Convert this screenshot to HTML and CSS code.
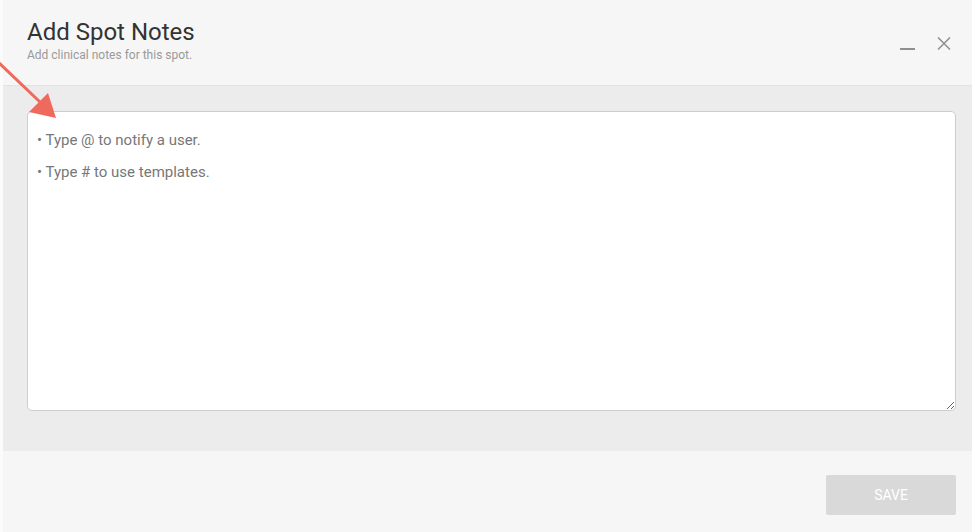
FILE: index.html
```html
<!DOCTYPE html>
<html lang="en">
<head>
    <meta charset="UTF-8">
    <meta name="viewport" content="width=device-width, initial-scale=1.0">
    <title>Add Spot Notes</title>
    <link rel="stylesheet" href="styles.css">
</head>
<body>
    <div class="dialog">
        <div class="dialog-header">
            <div class="heading">
                <h1 class="title">Add Spot Notes</h1>
                <p class="subtitle">Add clinical notes for this spot.</p>
            </div>
            <div class="header-actions">
                <button class="icon-btn minimize" title="Minimize">
                    <svg width="15" height="13" viewBox="0 0 15 13"><line x1="0" y1="12" x2="15" y2="12" stroke="#8f8f8f" stroke-width="2"/></svg>
                </button>
                <button class="icon-btn close" title="Close">
                    <svg width="14" height="13" viewBox="0 0 14 13"><path d="M1 0.5 L13 12.5 M13 0.5 L1 12.5" stroke="#8f8f8f" stroke-width="1.5" fill="none"/></svg>
                </button>
            </div>
        </div>

        <div class="dialog-body">
            <textarea class="notes-field" placeholder="• Type @ to notify a user.&#10;&#10;• Type # to use templates."></textarea>
        </div>

        <div class="dialog-footer">
            <button class="save-btn" disabled>SAVE</button>
        </div>
    </div>

    <svg class="pointer-arrow" width="70" height="130" viewBox="0 0 70 130">
        <line x1="-2" y1="62" x2="40" y2="102" stroke="#ef6a5d" stroke-width="3"/>
        <polygon points="56,118 29,112 48,93" fill="#ef6a5d"/>
    </svg>
</body>
</html>
```

FILE: styles.css
```css
body {
    margin: 0;
    font-family: Roboto, 'Noto Sans', sans-serif;
    background: #fbfbfb;
    height: 532px;
    overflow: hidden;
}

.dialog {
    margin-left: 3px;
    height: 532px;
    display: flex;
    flex-direction: column;
    background: #f6f6f6;
}

.dialog-header {
    height: 86px;
    box-sizing: border-box;
    display: flex;
    justify-content: space-between;
    align-items: flex-start;
    padding: 18px 21px 0 24px;
    border-bottom: 1px solid #e2e2e2;
    background: #f6f6f6;
}

.title {
    margin: 0;
    font-size: 24px;
    font-weight: 400;
    color: #333;
    line-height: 28px;
}

.subtitle {
    margin: 2px 0 0;
    font-size: 12px;
    color: #9a9a9a;
    line-height: 14px;
}

.header-actions {
    display: flex;
    align-items: flex-start;
    gap: 22px;
    margin-top: 19px;
}

.icon-btn {
    background: none;
    border: none;
    padding: 0;
    display: block;
    line-height: 0;
    cursor: pointer;
}

.dialog-body {
    flex: 1;
    background: #ececec;
    padding: 25px 16px 40px 24px;
    display: flex;
}

.notes-field {
    flex: 1;
    box-sizing: border-box;
    border: 1px solid #cdcdcd;
    border-radius: 5px;
    background: #fff;
    padding: 20px 10px 10px 9px;
    font-family: Roboto, 'Noto Sans', sans-serif;
    font-size: 15px;
    line-height: 16px;
    color: #333;
    resize: vertical;
    outline: none;
}

.notes-field::placeholder {
    color: #777;
}

.dialog-footer {
    height: 81px;
    box-sizing: border-box;
    display: flex;
    justify-content: flex-end;
    align-items: flex-start;
    padding: 24px 16px 0 0;
    background: #f6f6f6;
}

.save-btn {
    width: 130px;
    height: 40px;
    border: none;
    border-radius: 2px;
    background: #d9d9d9;
    color: #fff;
    font-family: Roboto, 'Noto Sans', sans-serif;
    font-size: 14px;
}

.pointer-arrow {
    position: absolute;
    left: 0;
    top: 0;
}
```
